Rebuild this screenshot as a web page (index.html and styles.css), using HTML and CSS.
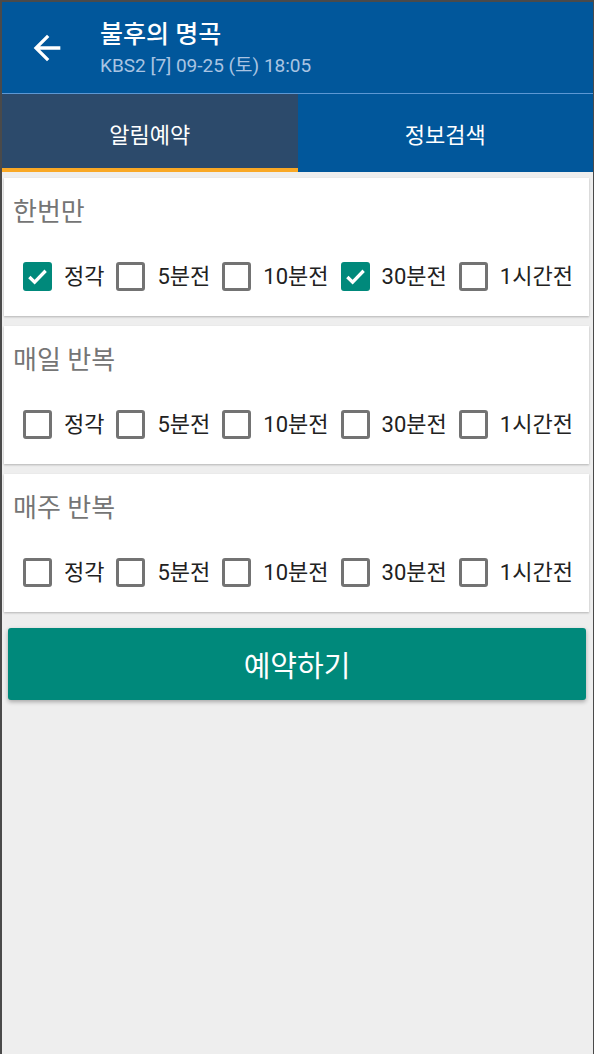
FILE: index.html
```html
<!DOCTYPE html>
<html lang="ko">
<head>
    <meta charset="UTF-8">
    <meta name="viewport" content="width=device-width, initial-scale=1.0">
    <title>불후의 명곡</title>
    <link rel="stylesheet" href="styles.css">
</head>
<body>

    <header class="appBar">
        <button class="backButton" aria-label="back">
            <svg viewBox="0 0 24 24" width="40" height="40"><path fill="#fff" d="M20 11H7.83l5.59-5.59L12 4l-8 8 8 8 1.41-1.41L7.83 13H20v-2z"/></svg>
        </button>
        <div class="titleBlock">
            <h1>불후의 명곡</h1>
            <p>KBS2 [7] 09-25 (토) 18:05</p>
        </div>
    </header>

    <nav class="tabs">
        <div class="tab active">알림예약</div>
        <div class="tab">정보검색</div>
    </nav>

    <main class="content">
        <section class="card">
            <h2>한번만</h2>
            <div class="options">
                <label class="option"><span class="box checked"></span>정각</label>
                <label class="option"><span class="box"></span>5분전</label>
                <label class="option"><span class="box"></span>10분전</label>
                <label class="option"><span class="box checked"></span>30분전</label>
                <label class="option"><span class="box"></span>1시간전</label>
            </div>
        </section>

        <section class="card">
            <h2>매일 반복</h2>
            <div class="options">
                <label class="option"><span class="box"></span>정각</label>
                <label class="option"><span class="box"></span>5분전</label>
                <label class="option"><span class="box"></span>10분전</label>
                <label class="option"><span class="box"></span>30분전</label>
                <label class="option"><span class="box"></span>1시간전</label>
            </div>
        </section>

        <section class="card">
            <h2>매주 반복</h2>
            <div class="options">
                <label class="option"><span class="box"></span>정각</label>
                <label class="option"><span class="box"></span>5분전</label>
                <label class="option"><span class="box"></span>10분전</label>
                <label class="option"><span class="box"></span>30분전</label>
                <label class="option"><span class="box"></span>1시간전</label>
            </div>
        </section>

        <button class="reserveButton">예약하기</button>
    </main>

</body>
</html>
```

FILE: styles.css
```css
* {
    box-sizing: border-box;
}

body {
    margin: 0;
    min-height: 100vh;
    background-color: #eeeeee;
    border-top: 2px solid #4a4a4a;
    border-left: 2px solid #4a4a4a;
    border-right: 1px solid #4a4a4a;
    font-family: Roboto, "Noto Sans CJK KR", sans-serif;
}

.appBar {
    display: flex;
    align-items: center;
    height: 92px;
    background-color: #01579b;
    border-bottom: 1px solid #5d98d4;
}

.backButton {
    display: flex;
    align-items: center;
    justify-content: center;
    width: 40px;
    height: 40px;
    margin-left: 25px;
    padding: 0;
    border: none;
    background: none;
}

.titleBlock {
    margin-left: 33px;
    margin-top: 2px;
}

.titleBlock h1 {
    margin: 0;
    color: #ffffff;
    font-size: 25px;
    font-weight: 500;
    line-height: 30px;
}

.titleBlock p {
    margin: 4px 0 0;
    color: #a9c4e2;
    font-size: 19px;
    line-height: 24px;
}

.tabs {
    display: flex;
    height: 78px;
    background-color: #01579b;
}

.tab {
    flex: 1;
    display: flex;
    align-items: center;
    justify-content: center;
    color: #ffffff;
    font-size: 22px;
}

.tab.active {
    background-color: #2c4a6b;
    border-bottom: 4px solid #f9a825;
    padding-top: 4px;
}

.content {
    padding: 6px 4px 0 2px;
}

.card {
    background-color: #ffffff;
    box-shadow: 0 1px 2px rgba(0, 0, 0, 0.25);
    padding: 18px 0 25px 19px;
    margin-bottom: 10px;
}

.card h2 {
    margin: 0 0 34px -10px;
    color: #757575;
    font-size: 26px;
    font-weight: 400;
    line-height: 32px;
}

.options {
    display: flex;
    align-items: center;
    gap: 12px;
}

.option {
    display: flex;
    align-items: center;
    gap: 12px;
    color: #212121;
    font-size: 22px;
    line-height: 29px;
}

.box {
    display: inline-block;
    width: 29px;
    height: 29px;
    border: 3px solid #737373;
    border-radius: 3px;
}

.box.checked {
    border-color: #00897b;
    background-color: #00897b;
    background-image: url("data:image/svg+xml,%3Csvg xmlns='http://www.w3.org/2000/svg' viewBox='0 0 24 24'%3E%3Cpath fill='none' stroke='%23fff' stroke-width='3.4' d='M3.5 12.5l5.5 5.5L20.5 6'/%3E%3C/svg%3E");
    background-size: 100% 100%;
}

.reserveButton {
    display: block;
    width: 578px;
    height: 72px;
    margin: 16px 0 0 4px;
    border: none;
    border-radius: 3px;
    background-color: #00897b;
    color: #ffffff;
    font-family: Roboto, "Noto Sans CJK KR", sans-serif;
    font-size: 29px;
    box-shadow: 0 2px 4px rgba(0, 0, 0, 0.3);
}
```
